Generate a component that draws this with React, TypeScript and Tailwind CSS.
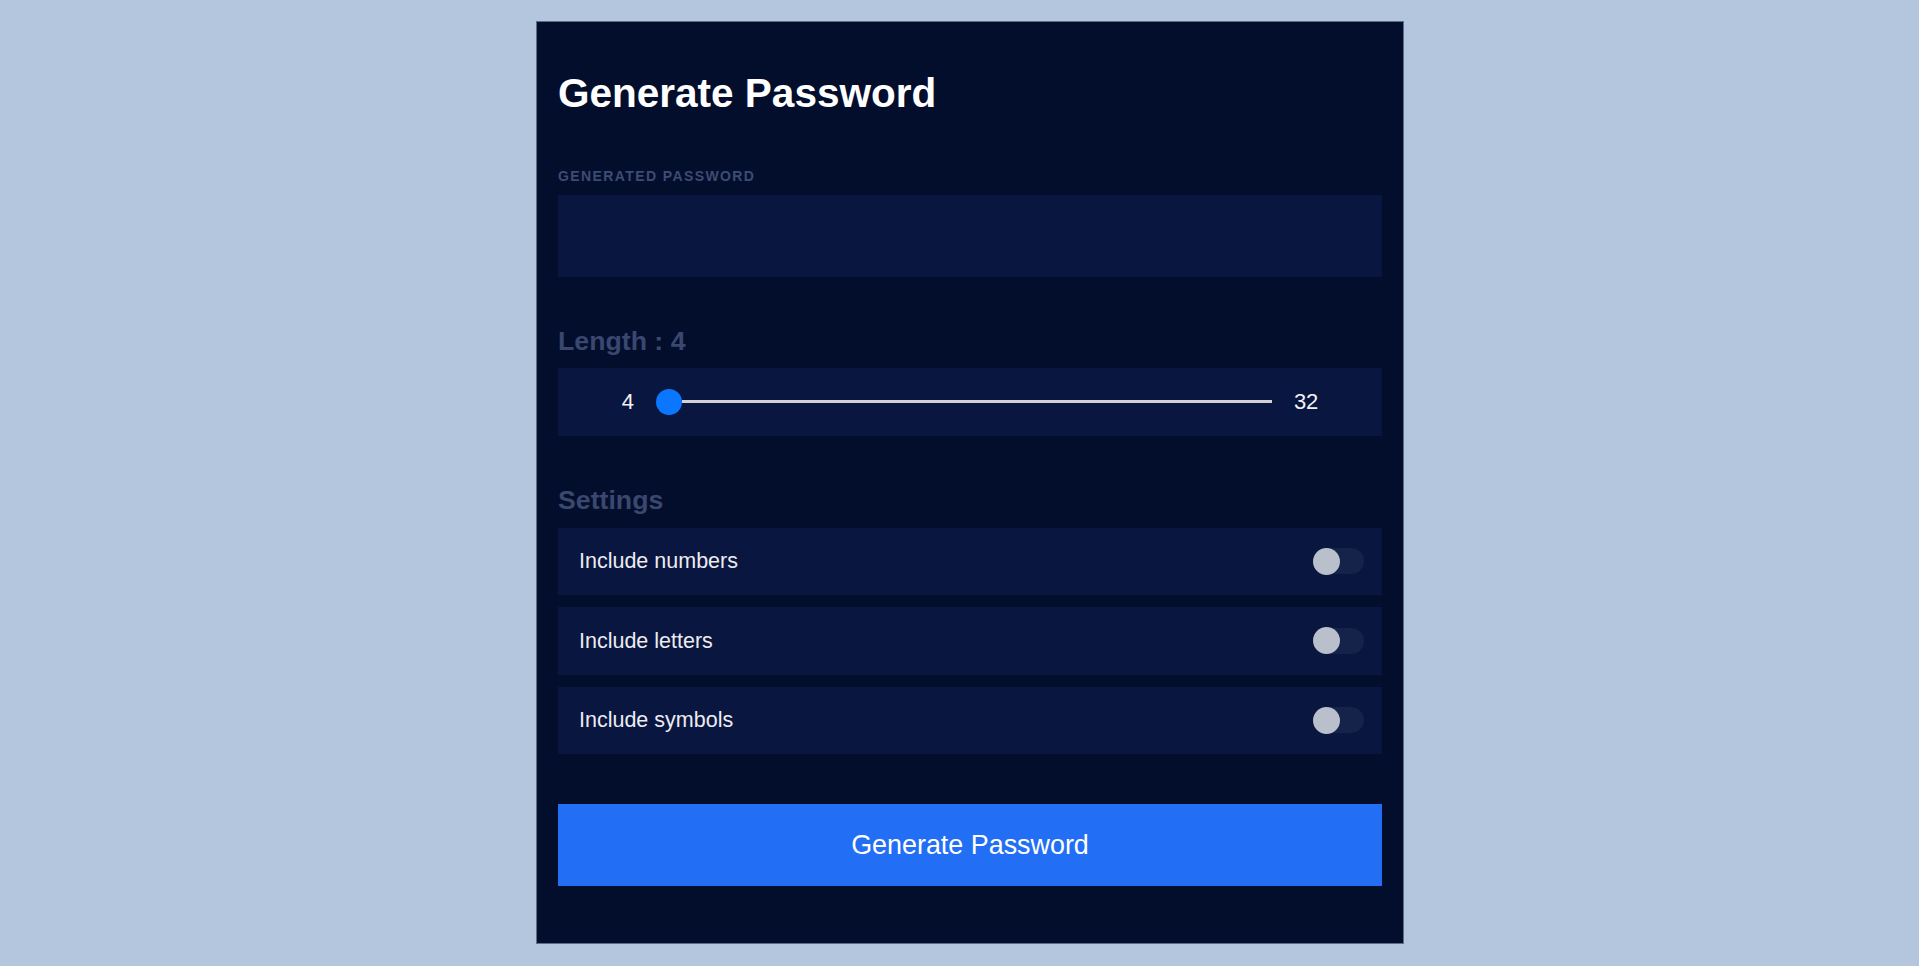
import React, { useState } from 'react';

type Setting = { key: string; label: string };

const settings: Setting[] = [
  { key: 'numbers', label: 'Include numbers' },
  { key: 'letters', label: 'Include letters' },
  { key: 'symbols', label: 'Include symbols' },
];

const Toggle: React.FC<{ on: boolean; onClick: () => void }> = ({ on, onClick }) => (
  <button
    type="button"
    onClick={onClick}
    className={`relative flex h-[26px] w-[51px] items-center rounded-full ${on ? 'bg-[#226ef4]' : 'bg-[#15234b]'}`}
  >
    <span
      className={`h-[27px] w-[27px] rounded-full bg-[#b9bfcb] ${on ? 'ml-auto' : ''}`}
    />
  </button>
);

export default function App() {
  const [length] = useState(4);
  const [flags, setFlags] = useState<Record<string, boolean>>({});

  return (
    <div className="flex min-h-screen justify-center bg-[#b4c5de] pl-[21px] pt-[21px] font-['Liberation_Sans',Arial,sans-serif]">
      <div className="h-[923px] w-[868px] border border-[#5d6b8c] bg-[#030e2c] px-[21px] pt-[21px]">
        <h1 className="mt-[27px] mb-[52px] text-[40.5px] font-bold leading-[46px] text-white">Generate Password</h1>

        {/* password output */}
        <p className="text-[14px] font-bold uppercase leading-[16px] tracking-[1.4px] text-[#3e4b74]">
          Generated password
        </p>
        <div className="mt-[11px] h-[82px] bg-[#09163f]" />

        {/* length */}
        <h2 className="mt-[49px] text-[26.7px] font-bold leading-[31px] text-[#3a476f]">Length : {length}</h2>
        <div className="mt-[11px] flex h-[67.5px] items-center justify-center gap-[22px] bg-[#09163f] text-[22px] text-[#f2f2f5]">
          <span>4</span>
          <div className="flex w-[616px] items-center">
            <span className="h-[26px] w-[26px] shrink-0 rounded-full bg-[#0b76ff]" />
            <span className="h-[3px] flex-1 bg-[#d2d2d6]" />
          </div>
          <span>32</span>
        </div>

        {/* settings */}
        <h2 className="mt-[49.5px] text-[26.7px] font-bold leading-[31px] text-[#3a476f]">Settings</h2>
        <div className="mt-[11.5px] flex flex-col gap-[12px]">
          {settings.map((s) => (
            <div key={s.key} className="flex h-[67.5px] items-center justify-between bg-[#09163f] pl-[21px] pr-[18px]">
              <span className="text-[21.5px] text-[#ececf1]">{s.label}</span>
              <Toggle on={!!flags[s.key]} onClick={() => setFlags({ ...flags, [s.key]: !flags[s.key] })} />
            </div>
          ))}
        </div>

        <button
          type="button"
          className="mt-[50px] flex h-[81.5px] w-full items-center justify-center bg-[#226ef4] text-[26.9px] text-white"
        >
          Generate Password
        </button>
      </div>
    </div>
  );
}
